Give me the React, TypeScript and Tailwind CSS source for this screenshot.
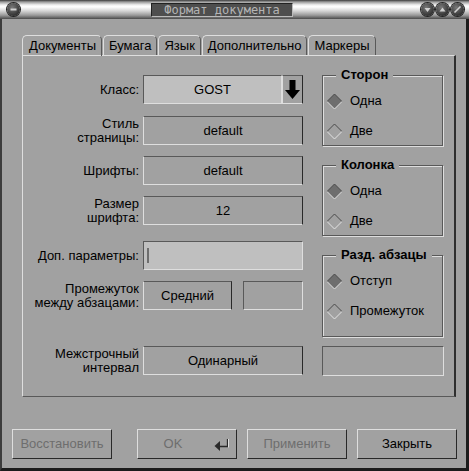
import React from 'react'

const font = { fontFamily: '"Liberation Sans", Arial, sans-serif' }

// XForms-like bevels
const flat =
  'border border-t-[#595959] border-l-[#dedede] border-b-[#dedede] border-r-[#292929]'
const sunken =
  'border border-t-[#595959] border-l-[#595959] border-b-[#dedede] border-r-[#dedede]'
const raised =
  'border border-t-[#dedede] border-l-[#dedede] border-b-[#292929] border-r-[#292929]'

function Diamond({ on }: { on?: boolean }) {
  return (
    <svg width="17" height="17" viewBox="0 0 17 17">
      <polygon points="8.5,1 16,8.5 8.5,16 1,8.5" fill={on ? '#6e6e6e' : 'none'} />
      <polyline points="1,8.5 8.5,1 16,8.5" fill="none" stroke="#4a4a4a" strokeWidth="1" />
      <polyline points="1,8.5 8.5,16 16,8.5" fill="none" stroke="#e4e4e4" strokeWidth="1" />
    </svg>
  )
}

function Group({ title, items, h }: { title: string; items: string[]; h: string }) {
  return (
    <div className={`relative w-[121px] ${h} border border-[#595959] shadow-[1px_1px_0_#dedede,inset_1px_1px_0_#dedede]`}>
      <span className="absolute left-[13px] top-[-9px] bg-[#a1a1a1] px-[5px] text-[13px] font-bold leading-[16px] text-black">
        {title}
      </span>
      <div className="flex flex-col pl-[3px] pt-[10px]">
        {items.map((it, i) => (
          <div key={it} className="flex h-[30px] items-center gap-[7px]">
            <Diamond on={i === 0} />
            <span className="text-[13px] text-black">{it}</span>
          </div>
        ))}
      </div>
    </div>
  )
}

function Row({ label, children, mt }: { label: React.ReactNode; children: React.ReactNode; mt: string }) {
  return (
    <div className={`flex h-[29px] items-center ${mt}`}>
      <div className="w-[116px] text-right text-[13px] leading-[14px] text-black">{label}</div>
      <div className="ml-[4px] flex h-full w-[160px]">{children}</div>
    </div>
  )
}

function Circle({ children }: { children: React.ReactNode }) {
  return (
    <div className="flex h-[13px] w-[13px] items-center justify-center rounded-full bg-[radial-gradient(circle_at_40%_35%,#7a7a7a,#2e2e2e_75%)] shadow-[0_0_0_1px_#222]">
      <svg width="9" height="9" viewBox="0 0 9 9">{children}</svg>
    </div>
  )
}

export default function App() {
  const tabs = ['Документы', 'Бумага', 'Язык', 'Дополнительно', 'Маркеры']
  return (
    <div className="flex h-[471px] w-[469px] flex-col bg-[#a1a1a1]" style={font}>
      {/* title bar */}
      <div className="flex h-[19px] items-center bg-[linear-gradient(to_bottom,#3a3a3a_0%,#9a9a9a_10%,#f0f0f0_26%,#ffffff_36%,#d4d4d4_58%,#9a9a9a_80%,#4a4a4a_100%)]">
        <div className="ml-[7px]">
          <Circle>
            <rect x="1.5" y="3.5" width="6" height="2" fill="#d0d0d0" />
          </Circle>
        </div>
        <div className="ml-[131px] flex h-[14px] w-[142px] items-center justify-center border border-t-[#222] border-l-[#222] border-b-[#bbb] border-r-[#bbb] bg-[#4e4e4e]">
          <span className="text-[12px] leading-[12px] text-[#b4b4b4]" style={{ fontFamily: '"DejaVu Sans Mono", monospace' }}>
            Формат документа
          </span>
        </div>
        <div className="ml-auto mr-[5px] flex gap-[2px]">
          <Circle>
            <polygon points="1.5,3 7.5,3 4.5,7" fill="#d0d0d0" />
          </Circle>
          <Circle>
            <polygon points="1.5,6.5 7.5,6.5 4.5,2.5" fill="#d0d0d0" />
          </Circle>
          <Circle>
            <line x1="1.5" y1="7.5" x2="7.5" y2="1.5" stroke="#d0d0d0" strokeWidth="1.6" />
          </Circle>
        </div>
      </div>

      {/* body */}
      <div className="flex flex-1 flex-col border-l-[2px] border-r-[3px] border-b-[3px] border-l-[#3c3c3c] border-r-[#1c1c1c] border-b-[#1c1c1c]">
        <div className="ml-[20px] mt-[16px] flex h-[20px] items-end">
          {tabs.map((t, i) => (
            <div
              key={t}
              className={`mr-[1px] flex h-[20px] items-center rounded-t-[5px] border-l border-t border-r border-l-[#dedede] border-t-[#dedede] border-r-[#595959] px-[5px] text-[13px] text-black ${
                i === 0 ? 'relative z-10 -mb-px h-[21px] pl-[6px]' : ''
              }`}
            >
              {t}
            </div>
          ))}
        </div>

        <div className="ml-[20px] flex h-[342px] w-[434px] border-l border-t border-r-2 border-b border-l-[#dedede] border-t-[#dedede] border-r-[#2e2e2e] border-b-[#595959]">
          {/* left column */}
          <div className="flex flex-col">
            <Row label="Класс:" mt="mt-[19px]">
              <div className={`flex h-full flex-1 items-center justify-center bg-[#bfbfbf] text-[13px] ${sunken}`}>GOST</div>
              <div className={`flex h-full w-[21px] items-center justify-center ${flat}`}>
                <svg width="15" height="20" viewBox="0 0 15 20">
                  <rect x="4.5" y="0" width="6" height="11" fill="#000" />
                  <polygon points="0,10 15,10 7.5,19" fill="#000" />
                </svg>
              </div>
            </Row>
            <Row label={<>Стиль<br />страницы:</>} mt="mt-[12px]">
              <div className={`flex h-full flex-1 items-center justify-center text-[13px] ${flat}`}>default</div>
            </Row>
            <Row label="Шрифты:" mt="mt-[11px]">
              <div className={`flex h-full flex-1 items-center justify-center text-[13px] ${flat}`}>default</div>
            </Row>
            <Row label={<>Размер<br />шрифта:</>} mt="mt-[11px]">
              <div className={`flex h-full flex-1 items-center justify-center text-[13px] ${flat}`}>12</div>
            </Row>
            <Row label="Доп. параметры:" mt="mt-[16px]">
              <div className={`flex h-full flex-1 items-center bg-[#bfbfbf] pl-[3px] ${sunken}`}>
                <div className="h-[15px] w-[2px] bg-[#6e6e6e]" />
              </div>
            </Row>
            <Row label={<>Промежуток<br />между абзацами:</>} mt="mt-[11px]">
              <div className={`flex h-full w-[89px] items-center justify-center text-[13px] ${flat}`}>Средний</div>
              <div className={`ml-[11px] h-full flex-1 ${sunken}`} />
            </Row>
            <Row label={<>Межстрочный<br />интервал</>} mt="mt-[36px]">
              <div className={`flex h-full flex-1 items-center justify-center text-[13px] ${flat}`}>Одинарный</div>
            </Row>
          </div>

          {/* right column */}
          <div className="ml-[19px] flex flex-col">
            <div className="mt-[19px]">
              <Group title="Сторон" items={['Одна', 'Две']} h="h-[71px]" />
            </div>
            <div className="mt-[19px]">
              <Group title="Колонка" items={['Одна', 'Две']} h="h-[71px]" />
            </div>
            <div className="mt-[19px]">
              <Group title="Разд. абзацы" items={['Отступ', 'Промежуток']} h="h-[82px]" />
            </div>
            <div className={`mt-[9px] h-[30px] w-[122px] ${sunken}`} />
          </div>
        </div>

        {/* buttons */}
        <div className="ml-[10px] mt-[32px] flex text-[13px]">
          <div className={`flex h-[30px] w-[100px] items-center justify-center text-[#6e6e6e] ${raised}`}>Восстановить</div>
          <div className={`relative ml-[25px] flex h-[30px] w-[100px] items-center justify-center text-[#6e6e6e] ${raised}`}>
            <span className="mr-[28px]">OK</span>
            <svg className="absolute right-[6px] top-[8px]" width="16" height="13" viewBox="0 0 16 13">
              <polygon points="0.5,8 6,3 6,13" fill="#2a2a2a" />
              <polyline points="6,8.5 13.5,8.5 13.5,1" fill="none" stroke="#2a2a2a" strokeWidth="1.3" />
              <line x1="14.5" y1="1" x2="14.5" y2="9.5" stroke="#e0e0e0" strokeWidth="1" />
            </svg>
          </div>
          <div className={`ml-[10px] flex h-[30px] w-[100px] items-center justify-center text-[#6e6e6e] ${raised}`}>Применить</div>
          <div className={`ml-[10px] flex h-[30px] w-[100px] items-center justify-center text-black ${raised}`}>Закрыть</div>
        </div>
      </div>
    </div>
  )
}
